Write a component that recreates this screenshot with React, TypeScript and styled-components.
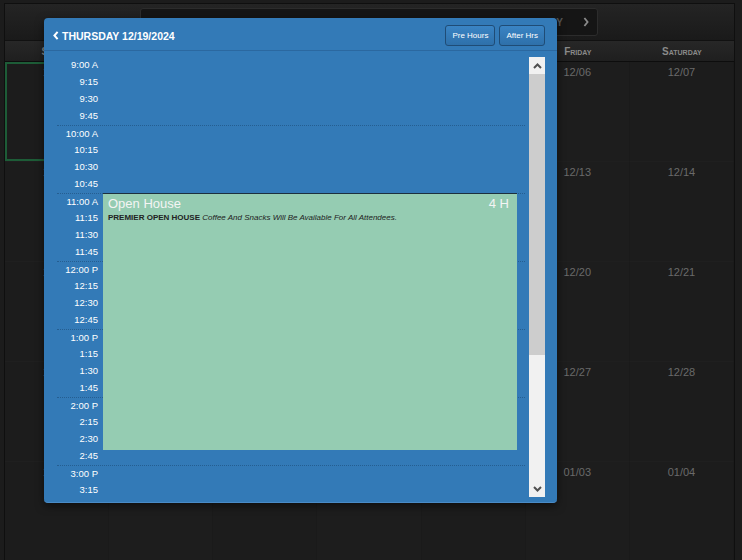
import React from 'react';
import styled, { createGlobalStyle } from 'styled-components';

const GlobalStyle = createGlobalStyle`
  html, body {
    margin: 0;
    padding: 0;
    background: #1c1c1c;
  }
  body {
    font-family: "Liberation Sans", Arial, sans-serif;
  }
`;

const DAYS = ['Sunday', 'Monday', 'Tuesday', 'Wednesday', 'Thursday', 'Friday', 'Saturday'];

const pad = (n: number) => (n < 10 ? '0' + n : String(n));

const buildWeeks = () => {
  const weeks: string[][] = [];
  const d = new Date(2024, 11, 1);
  for (let w = 0; w < 5; w++) {
    const row: string[] = [];
    for (let i = 0; i < 7; i++) {
      row.push(pad(d.getMonth() + 1) + '/' + pad(d.getDate()));
      d.setDate(d.getDate() + 1);
    }
    weeks.push(row);
  }
  return weeks;
};

// quarter-hour slots from 9:00 A down to 3:15 P (what fits in the view)
const buildSlots = () => {
  const slots: { label: string; hour: boolean }[] = [];
  for (let h = 9; h <= 15; h++) {
    const h12 = h > 12 ? h - 12 : h;
    const suffix = h < 12 ? 'A' : 'P';
    const mins = h === 15 ? [0, 15] : [0, 15, 30, 45];
    mins.forEach((m) => {
      slots.push({
        label: m === 0 ? `${h12}:00 ${suffix}` : `${h12}:${m}`,
        hour: m === 0,
      });
    });
  }
  return slots;
};

const ChevronLeft = () => (
  <svg width='6' height='9' viewBox='0 0 6 9'>
    <path d='M4.6 0.8 L1.4 4.5 L4.6 8.2' fill='none' stroke='#fff' strokeWidth='2' />
  </svg>
);

const ChevronRight = () => (
  <svg width='6' height='10' viewBox='0 0 6 10'>
    <path d='M1.4 1 L4.6 5 L1.4 9' fill='none' stroke='#8a8a8a' strokeWidth='1.8' />
  </svg>
);

const ArrowUp = () => (
  <svg width='9' height='6' viewBox='0 0 9 6'>
    <path d='M1 5 L4.5 1.5 L8 5' fill='none' stroke='#505050' strokeWidth='2' />
  </svg>
);

const ArrowDown = () => (
  <svg width='9' height='6' viewBox='0 0 9 6'>
    <path d='M1 1 L4.5 4.5 L8 1' fill='none' stroke='#505050' strokeWidth='2' />
  </svg>
);

const App = () => {
  const weeks = buildWeeks();
  const slots = buildSlots();

  return (
    <Page>
      <GlobalStyle />
      <Frame>
        <TopBar>
          <Toolbar>
            <ToolbarLabel>Today</ToolbarLabel>
            <NavButton>
              <ChevronRight />
            </NavButton>
          </Toolbar>
        </TopBar>
        <DayHeader>
          {DAYS.map((day) => (
            <DayName key={day}>{day}</DayName>
          ))}
        </DayHeader>
        <Weeks>
          {weeks.map((week, wi) =>
            week.map((date, di) => (
              <Cell key={date} $selected={wi === 0 && di === 0} $odd={di % 2 === 1}>
                {date}
              </Cell>
            ))
          )}
        </Weeks>
      </Frame>

      <Modal>
        <ModalHeader>
          <Title>
            <ChevronLeft />
            Thursday 12/19/2024
          </Title>
          <HeaderButtons>
            <HeaderButton>Pre Hours</HeaderButton>
            <HeaderButton>After Hrs</HeaderButton>
          </HeaderButtons>
        </ModalHeader>
        <ModalBody>
          <Timeline>
            {slots.map((slot, i) => (
              <TimeRow key={slot.label} $hour={slot.hour && i > 0}>
                <TimeLabel>{slot.label}</TimeLabel>
              </TimeRow>
            ))}
            <Event>
              <EventTitle>
                <span>Open House</span>
                <span>4 H</span>
              </EventTitle>
              <EventText>
                <strong>PREMIER OPEN HOUSE</strong>{' '}
                <em>Coffee And Snacks Will Be Available For All Attendees.</em>
              </EventText>
            </Event>
          </Timeline>
          <Scrollbar>
            <ScrollArrow>
              <ArrowUp />
            </ScrollArrow>
            <ScrollThumb />
            <ScrollTrack />
            <ScrollArrow>
              <ArrowDown />
            </ScrollArrow>
          </Scrollbar>
        </ModalBody>
      </Modal>
    </Page>
  );
};

export default App;

const Page = styled.div`
  position: relative;
  width: 742px;
  height: 560px;
  overflow: hidden;
  box-sizing: border-box;
  padding: 3px 0 0 4px;
  background: #1c1c1c;
`;

const Frame = styled.div`
  width: 731px;
  box-sizing: border-box;
  border: 1px solid #0f0f0f;
  border-bottom: none;
`;

const TopBar = styled.div`
  height: 36px;
  box-sizing: border-box;
  padding: 4px 0 0 135px;
  background: linear-gradient(#242424, #1a1a1a);
`;

const Toolbar = styled.div`
  width: 458px;
  height: 28px;
  box-sizing: border-box;
  display: flex;
  align-items: center;
  justify-content: flex-end;
  background: #151515;
  border: 1px solid #2c2c2c;
  border-radius: 3px;
`;

const ToolbarLabel = styled.span`
  font-size: 10px;
  font-weight: bold;
  color: #555;
  text-transform: uppercase;
  margin-right: 20px;
`;

const NavButton = styled.span`
  display: flex;
  align-items: center;
  padding-right: 8px;
`;

const DayHeader = styled.div`
  display: grid;
  grid-template-columns: repeat(7, 1fr);
  height: 22px;
  box-sizing: border-box;
  border-top: 1px solid #111;
  border-bottom: 1px solid #0d0d0d;
  background: linear-gradient(#272727, #1f1f1f);
`;

const DayName = styled.div`
  display: flex;
  align-items: center;
  justify-content: center;
  font-size: 10px;
  font-weight: bold;
  font-variant: small-caps;
  color: #8a8a8a;
`;

const Weeks = styled.div`
  display: grid;
  grid-template-columns: repeat(7, 1fr);
  grid-auto-rows: 100px;
`;

const Cell = styled.div<{ $selected?: boolean; $odd?: boolean }>`
  box-sizing: border-box;
  padding-top: 4px;
  text-align: center;
  font-size: 11px;
  color: #6a6a6a;
  background: ${(p) => (p.$odd ? '#1d1d1d' : '#1c1c1c')};
  border-right: 1px solid #1a1a1a;
  border-bottom: 1px solid #1f1f1f;
  box-shadow: ${(p) => (p.$selected ? 'inset 0 0 0 2px #1d5c37' : 'none')};
`;

const Modal = styled.div`
  position: absolute;
  left: 44px;
  top: 18px;
  width: 513px;
  height: 485px;
  background: #337ab7;
  border-radius: 4px;
  box-shadow: 0 3px 9px rgba(0, 0, 0, 0.5);
  overflow: hidden;
  border-bottom: 1px solid #4a8bc6;
  box-sizing: border-box;
`;

const ModalHeader = styled.div`
  height: 33px;
  box-sizing: border-box;
  padding: 3px 12px 0 9px;
  display: flex;
  align-items: center;
  justify-content: space-between;
  border-bottom: 1px solid #2b68a0;
`;

const Title = styled.div`
  display: flex;
  align-items: center;
  gap: 3px;
  color: #fff;
  font-size: 10.5px;
  font-weight: bold;
  text-transform: uppercase;
`;

const HeaderButtons = styled.div`
  display: flex;
  gap: 4px;
`;

const HeaderButton = styled.button`
  height: 21px;
  padding: 0 6px;
  font-family: "Liberation Sans", Arial, sans-serif;
  font-size: 8px;
  color: #fff;
  background: linear-gradient(#3a84c4, #2e70aa);
  border: 1px solid #1f4c76;
  border-radius: 3px;
  cursor: pointer;
`;

const ModalBody = styled.div`
  display: flex;
  padding: 6px 12px 0 13px;
`;

const Timeline = styled.div`
  position: relative;
  flex: 1;
  height: 440px;
  margin-right: 4px;
  overflow: hidden;
`;

const TimeRow = styled.div<{ $hour?: boolean }>`
  height: 17px;
  box-sizing: border-box;
  display: flex;
  border-top: ${(p) => (p.$hour ? '1px dotted rgba(20, 60, 100, 0.45)' : 'none')};
`;

const TimeLabel = styled.div`
  width: 41px;
  text-align: right;
  font-size: 9.5px;
  line-height: 16px;
  color: #fff;
`;

const Event = styled.div`
  position: absolute;
  left: 46px;
  top: 136px;
  width: 414px;
  height: 257px;
  box-sizing: border-box;
  background: #95ccb2;
  border-top: 1px solid #1c2f3e;
  padding: 2px 8px 0 5px;
`;

const EventTitle = styled.div`
  display: flex;
  justify-content: space-between;
  font-size: 13px;
  line-height: 16px;
  color: #f4f4f4;
`;

const EventText = styled.div`
  font-size: 8px;
  line-height: 11px;
  color: #222;

  strong {
    font-weight: bold;
  }
`;

const Scrollbar = styled.div`
  width: 16px;
  height: 440px;
  display: flex;
  flex-direction: column;
  background: #f1f1f1;
`;

const ScrollArrow = styled.div`
  height: 17px;
  display: flex;
  align-items: center;
  justify-content: center;
`;

const ScrollThumb = styled.div`
  height: 281px;
  background: #cdcdcd;
`;

const ScrollTrack = styled.div`
  flex: 1;
`;
